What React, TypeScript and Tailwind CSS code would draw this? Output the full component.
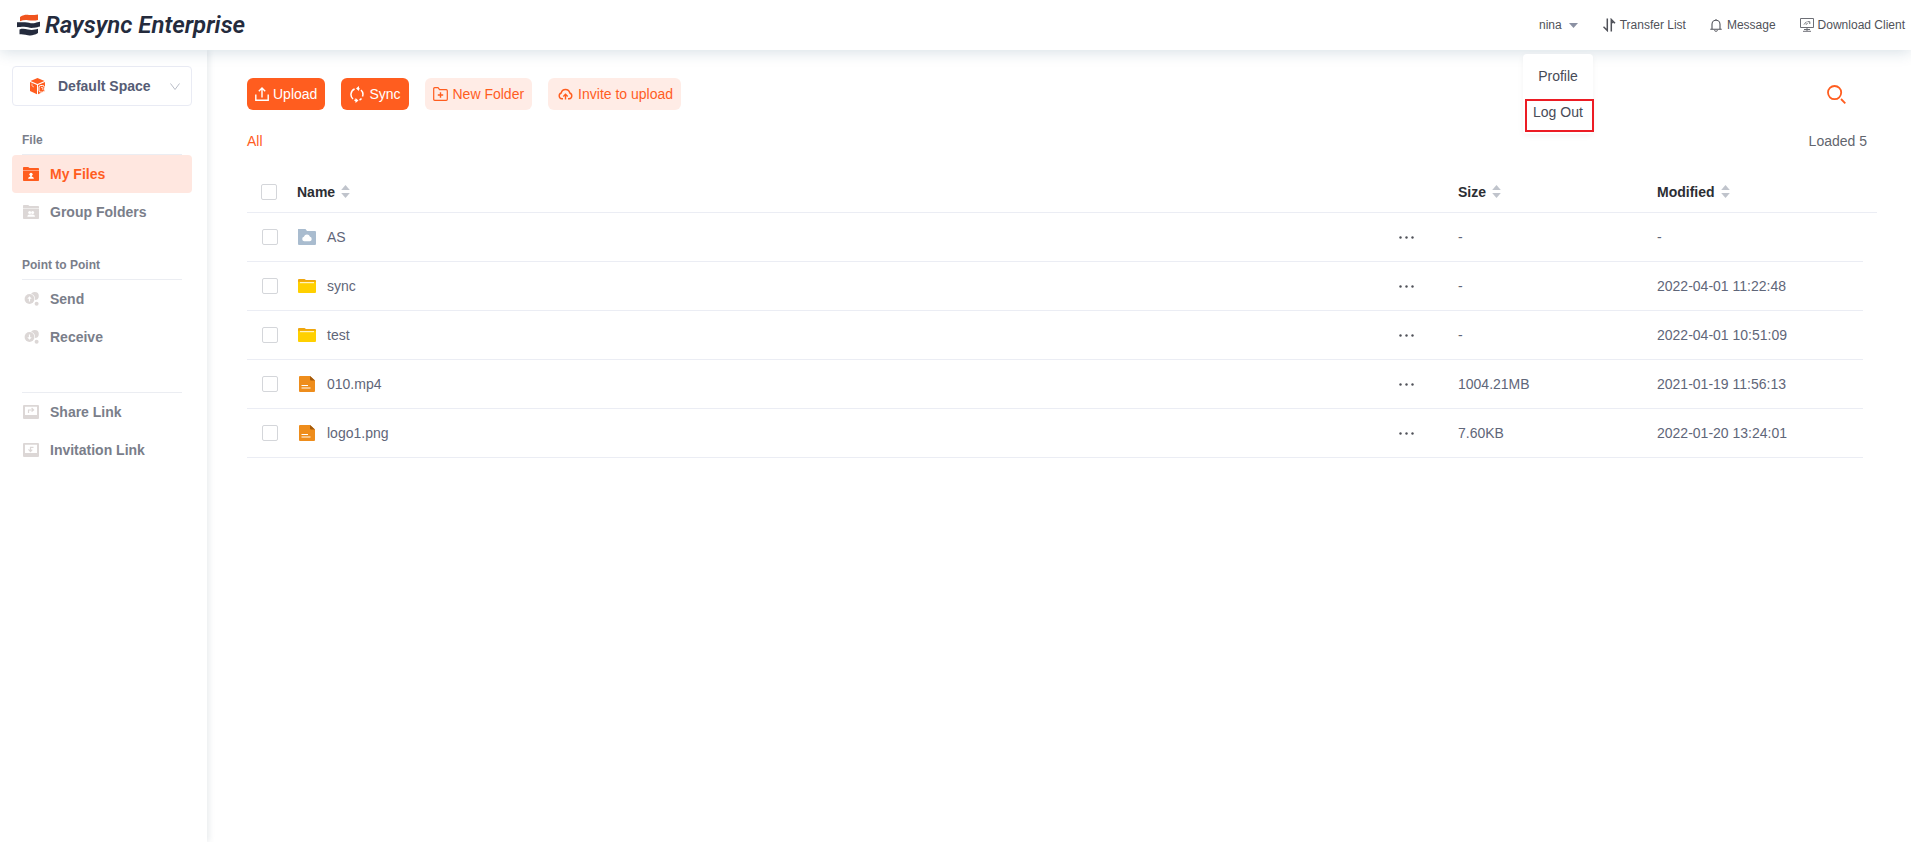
import React, { useState } from 'react';

type FileKind = 'cloud' | 'folder' | 'file';

interface FileRow {
    name: string;
    kind: FileKind;
    size: string;
    modified: string;
}

const files: FileRow[] = [
    { name: 'AS', kind: 'cloud', size: '-', modified: '-' },
    { name: 'sync', kind: 'folder', size: '-', modified: '2022-04-01 11:22:48' },
    { name: 'test', kind: 'folder', size: '-', modified: '2022-04-01 10:51:09' },
    { name: '010.mp4', kind: 'file', size: '1004.21MB', modified: '2021-01-19 11:56:13' },
    { name: 'logo1.png', kind: 'file', size: '7.60KB', modified: '2022-01-20 13:24:01' },
];

// Brand mark
const LogoMark = () => (
    <svg width="23" height="22" viewBox="0 0 23 22" aria-hidden="true">
        <path d="M3 3C7 0.500 9 0.700 12 0.900C15 1.100 18 0.800 21 0.400V6C17 7 14 6.400 11 6.200C8 5.900 5.500 6.200 3 7.200Z" fill="#f0541e" />
        <path d="M0 8.200C4 8.400 5 8.200 8 8.200C12 8.200 14 10 18 9C20 8.400 21 7.900 23 7.800V12.400C21 12.700 20 13.400 17 13.800C12 14.400 11 12.800 7 12.800C4 12.800 2 13.200 0 13.200Z" fill="#242b3d" />
        <path d="M2.500 15.400C6 14.400 8 15 11 15.600C15 16.400 18 15.800 21 14.800V19C17 21.500 14 21.600 11 21.200C7 20.600 5 20.200 2.500 20.200Z" fill="#242b3d" />
    </svg>
);

const CubeIcon = () => (
    <svg width="16" height="17" viewBox="0 0 16 17" aria-hidden="true">
        <path d="M7.500 0L14.500 3L7.500 6L0.500 3Z" fill="#ff5d1f" />
        <path d="M0 4L7 7V16.200L0 13Z" fill="#ff5d1f" />
        <path d="M8 7L15 4V13L8 16.200Z" fill="#ff5d1f" />
        <path d="M2 5.500V8L4 9" stroke="#fff" strokeWidth="0.600" fill="none" />
        <rect x="9" y="7.500" width="5.400" height="6.600" rx="1.800" fill="#ff5d1f" stroke="#fff" strokeWidth="1" />
        <path d="M11 9.500H12.800V12" stroke="#fff" strokeWidth="0.700" fill="none" />
    </svg>
);

const UserFolderIcon = ({ group }: { group?: boolean }) => (
    <svg width="16" height="14" viewBox="0 0 16 14" aria-hidden="true">
        <path d="M0 0.800Q0 0 0.800 0H5.200L6.500 1H15.200Q16 1 16 1.800V3H0Z" fill="currentColor" />
        <path d="M0 3.400H16V13.200Q16 14 15.200 14H0.800Q0 14 0 13.200Z" fill="currentColor" />
        {group ? (
            <g fill="#fff">
                <circle cx="6.700" cy="7.400" r="1.500" />
                <circle cx="9.600" cy="7.400" r="1.500" />
                <path d="M4.300 11.800Q4.300 9.400 6.700 9.400H9.600Q12 9.400 12 11.800Z" />
            </g>
        ) : (
            <g fill="#fff">
                <circle cx="8" cy="7.300" r="1.600" />
                <path d="M7.300 8H8.700V9.400Q10.900 9.700 10.900 11.700H5.100Q5.100 9.700 7.300 9.400Z" />
            </g>
        )}
    </svg>
);

const PointIcon = ({ down }: { down?: boolean }) => (
    <svg width="16" height="14" viewBox="0 0 16 14" aria-hidden="true">
        <circle cx="11.800" cy="4" r="4" fill="currentColor" />
        <circle cx="6.500" cy="7" r="5.600" fill="#fff" />
        <circle cx="6.500" cy="7" r="4.900" fill="currentColor" />
        <circle cx="13.600" cy="11.800" r="2" fill="currentColor" />
        <path d={down ? 'M6.500 9.800L4.300 7.300H5.900V4.600H7.100V7.300H8.700Z' : 'M6.500 4.200L4.300 6.700H5.900V9.400H7.100V6.700H8.700Z'} fill="#fff" />
    </svg>
);

const LinkIcon = ({ incoming }: { incoming?: boolean }) => (
    <svg width="16" height="14" viewBox="0 0 16 14" aria-hidden="true">
        <path d="M1 0H15Q16 0 16 1V13Q16 14 15 14H1Q0 14 0 13V1Q0 0 1 0ZM2 1.800V10H14V1.800Z" fill="currentColor" fillRule="evenodd" />
        {incoming ? (
            <path d="M10.500 4.300H7.500V8M5.500 6.400L7.500 8.600L9.200 6.600" stroke="currentColor" strokeWidth="1.200" fill="none" />
        ) : (
            <path d="M5.500 8V5H10M8.600 3L10.600 5L8.600 6.600" stroke="currentColor" strokeWidth="1.200" fill="none" />
        )}
    </svg>
);

const SortArrows = () => (
    <svg width="9" height="13" viewBox="0 0 9 13" fill="#c0c4cc" aria-hidden="true">
        <path d="M4.500 0L8.800 5H0.200Z" />
        <path d="M4.500 13L8.800 8H0.200Z" />
    </svg>
);

const FileIcon = ({ kind }: { kind: FileKind }) => {
    if (kind === 'cloud') {
        return (
            <svg width="18" height="16" viewBox="0 0 18 16" aria-hidden="true">
                <path d="M0 0H7.500L9 2H17Q18 2 18 3V15Q18 16 17 16H1Q0 16 0 15Z" fill="#a9bccf" />
                <path d="M6.300 12.300A2.300 2.300 0 0 1 5.900 7.800A3.200 3.200 0 0 1 12 7.800A2.300 2.300 0 0 1 11.700 12.300Z" fill="#fff" />
            </svg>
        );
    }
    if (kind === 'folder') {
        return (
            <svg width="18" height="14" viewBox="0 0 18 14" aria-hidden="true">
                <path d="M0 1Q0 0 1 0H6.500L8 1H17Q18 1 18 2V7H0Z" fill="#efa60e" />
                <path d="M0 2.800H18V13Q18 14 17 14H1Q0 14 0 13Z" fill="#ffd000" />
                <rect x="2" y="3" width="14" height="1.200" fill="#fff3c4" />
            </svg>
        );
    }
    return (
        <svg width="18" height="16" viewBox="0 0 18 16" aria-hidden="true">
            <path d="M2 0H12L17 4.500V15Q17 16 16 16H2Q1 16 1 15V1Q1 0 2 0Z" fill="#ee8d1c" />
            <path d="M12 0L17 4.500H13Q12 4.500 12 3.500Z" fill="#a35a0c" />
            <path d="M3.500 9.500H10" stroke="#fff" strokeWidth="1" />
            <path d="M3.500 12H12.500" stroke="#f9d3a4" strokeWidth="1.600" />
        </svg>
    );
};

const Checkbox = ({ label }: { label: string }) => (
    <input
        type="checkbox"
        aria-label={label}
        className="block size-4 appearance-none rounded-xs border border-[#d4d6da] bg-white checked:border-[#ff5d1f] checked:bg-[#ff5d1f]"
    />
);

interface NavItemProps {
    label: string;
    icon: React.ReactNode;
    active?: boolean;
}

const NavItem: React.FC<NavItemProps> = ({ label, icon, active }) => (
    <li>
        <a
            href="#"
            className={`flex h-[38px] items-center gap-[11px] rounded pl-[11px] text-sm font-bold ${
                active ? 'bg-[#ffe7e0] text-[#ff5d1f]' : 'text-[#7a7e8a]'
            }`}
        >
            <span className={active ? 'text-[#ff5d1f]' : 'text-[#dcd7d6]'}>{icon}</span>
            {label}
        </a>
    </li>
);

const Sidebar = () => (
    <aside className="w-[207px] shrink-0 bg-white px-3 pt-4 shadow-[2px_0_6px_rgba(30,60,80,0.1)]">
        <div className="relative w-[180px]">
            <span className="pointer-events-none absolute top-3 left-[18px]"><CubeIcon /></span>
            <select
                aria-label="Space"
                className="h-10 w-full appearance-none rounded border border-[#e9ebf4] bg-white pl-[45px] text-sm font-bold text-[#565c75]"
            >
                <option>Default Space</option>
            </select>
            <svg className="pointer-events-none absolute top-[17px] right-3" width="10" height="8" viewBox="0 0 10 8" fill="none" stroke="#b9bdc7" aria-hidden="true">
                <path d="M0.500 0.500L5 6.500L9.500 0.500" />
            </svg>
        </div>
        <nav className="w-[180px]">
            <h2 className="mx-[10px] border-b border-[#ebedf2] pt-6 pb-1 text-xs/5 font-bold text-[#7a7e8a]">File</h2>
            <ul>
                <NavItem label="My Files" icon={<UserFolderIcon />} active />
                <NavItem label="Group Folders" icon={<UserFolderIcon group />} />
            </ul>
            <h2 className="mx-[10px] border-b border-[#ebedf2] pt-6 pb-1 text-xs/5 font-bold text-[#7a7e8a]">Point to Point</h2>
            <ul>
                <NavItem label="Send" icon={<PointIcon />} />
                <NavItem label="Receive" icon={<PointIcon down />} />
            </ul>
            <hr className="mx-[10px] mt-9 border-[#ebedf2]" />
            <ul>
                <NavItem label="Share Link" icon={<LinkIcon />} />
                <NavItem label="Invitation Link" icon={<LinkIcon incoming />} />
            </ul>
        </nav>
    </aside>
);

const Header = () => {
    const [menuOpen, setMenuOpen] = useState(true);

    return (
        <header className="relative z-10 flex h-[50px] items-center justify-between bg-white pr-[6px] pl-[17px] shadow-[0_2px_14px_rgba(30,80,110,0.18)]">
            <a href="#" className="flex items-center gap-[5px] text-[#242b3d]">
                <LogoMark />
                <span className="font-[Roboto,sans-serif] text-2xl/6 font-semibold italic">Raysync Enterprise</span>
            </a>
            <nav className="flex items-center text-xs text-[#505259]">
                <div className="relative mr-[25px]">
                    <button type="button" className="flex items-center gap-[7px]" aria-expanded={menuOpen} onClick={() => setMenuOpen(!menuOpen)}>
                        nina
                        <svg width="9" height="5" viewBox="0 0 9 5" fill="#8b91a3" aria-hidden="true"><path d="M0 0H9L4.500 5Z" /></svg>
                    </button>
                    {menuOpen && (
                        <div className="absolute top-[37px] -left-4 flex h-20 w-[70px] flex-col rounded bg-white text-sm text-[#474b57] shadow-[0_2px_6px_rgba(0,0,0,0.05)]">
                            <button type="button" className="h-[45px] pb-[2px] text-center">Profile</button>
                            <button type="button" className="ml-[2px] h-[33px] w-[69px] border-2 border-[#ec1c24] pr-[3px] pb-2 text-center">Log Out</button>
                        </div>
                    )}
                </div>
                <a href="#" className="mr-6 flex items-center gap-1">
                    <svg width="13" height="14" viewBox="0 0 13 14" fill="none" stroke="#505259" strokeWidth="1.500" aria-hidden="true">
                        <path d="M4.300 0.500V12.500L0.500 8.700M8.300 13.500V1.500L12 5.200" />
                        <path d="M8 5.500V1.500L11 5Z" fill="#505259" stroke="none" />
                    </svg>
                    Transfer List
                </a>
                <a href="#" className="mr-6 flex items-center gap-[5px]">
                    <svg width="12" height="13" viewBox="0 0 12 13" fill="none" stroke="#505259" aria-hidden="true">
                        <path d="M2 10V5.300A4 4 0 0 1 10 5.300V10M0.300 10.200H11.700M6 0V1.300" strokeWidth="1.100" />
                        <path d="M4.300 11.500Q6 13.300 7.700 11.500" />
                    </svg>
                    Message
                </a>
                <a href="#" className="flex items-center gap-1">
                    <svg width="14" height="14" viewBox="0 0 14 14" fill="none" stroke="#6d6f76" aria-hidden="true">
                        <path d="M0.500 0.500H13.500V9.500H0.500ZM7 9.500V13M3 13.300H11M4 11.500H10" />
                        <path d="M4 6.500L6.500 3.700M6 6.800L7.500 5M7.500 3.700H9.800V6" />
                    </svg>
                    Download Client
                </a>
            </nav>
        </header>
    );
};

const Toolbar = () => (
    <div className="flex items-center justify-between">
        <div className="flex gap-4 text-sm">
            <button type="button" className="flex h-8 items-center gap-1 rounded-md bg-[#ff5d1f] px-2 text-white">
                <svg width="14" height="14" viewBox="0 0 14 14" fill="none" stroke="currentColor" strokeWidth="1.400" aria-hidden="true">
                    <path d="M0.800 7.500V13.200H13.200V7.500M7 10.500V1.200M3.800 4.200L7 1L10.200 4.200" />
                </svg>
                Upload
            </button>
            <button type="button" className="flex h-8 items-center gap-[5px] rounded-md bg-[#ff5d1f] pr-2 pl-[9px] text-white">
                <svg width="14" height="17" viewBox="0 0 14 17" fill="none" stroke="currentColor" strokeWidth="1.500" aria-hidden="true">
                    <path d="M4.600 3A6 6 0 0 0 3 13M7.500 2.500A6 6 0 0 1 9.500 3M11 4A6 6 0 0 1 12.500 10.500M11.500 12.500A6 6 0 0 1 9.500 14M6.500 14.500A6 6 0 0 1 4.500 14" />
                    <path d="M9 0V5L6 2.600ZM5.500 12V17L8.500 14.500Z" fill="currentColor" stroke="none" />
                </svg>
                Sync
            </button>
            <button type="button" className="flex h-8 items-center gap-[5px] rounded-md bg-[#ffece6] px-2 text-[#ff5d1f]">
                <svg width="15" height="14" viewBox="0 0 15 14" fill="none" stroke="currentColor" strokeWidth="1.200" aria-hidden="true">
                    <path d="M0.700 12.300V1.700Q0.700 0.700 1.700 0.700H5L6.600 2.700H13.300Q14.300 2.700 14.300 3.700V12.300Q14.300 13.300 13.300 13.300H1.700Q0.700 13.300 0.700 12.300Z" />
                    <path d="M7.500 5.300V10.700M4.800 8H10.200" strokeWidth="1.400" />
                </svg>
                New Folder
            </button>
            <button type="button" className="flex h-8 items-center gap-[5px] rounded-md bg-[#ffece6] pr-2 pl-[10px] text-[#ff5d1f]">
                <svg width="15" height="12" viewBox="0 0 15 12" fill="none" stroke="currentColor" strokeWidth="1.400" aria-hidden="true">
                    <path d="M5 10.800H3.800A3 3 0 0 1 3.200 5A4.400 4.400 0 0 1 11.800 5A3 3 0 0 1 11.200 10.800H10" />
                    <path d="M7.500 11.500V6.500M5.300 8.500L7.500 6.200L9.700 8.500" />
                </svg>
                Invite to upload
            </button>
        </div>
        <button type="button" aria-label="Search" className="mr-[31px]">
            <svg width="19" height="19" viewBox="0 0 19 19" fill="none" stroke="#ff5d1f" strokeWidth="1.800" aria-hidden="true">
                <circle cx="7.600" cy="7.600" r="6.600" />
                <path d="M14 14L18.300 18.300" />
            </svg>
        </button>
    </div>
);

const FileTable = () => (
    <table className="mt-4 w-full table-fixed border-separate border-spacing-0 text-left text-sm">
        <colgroup>
            <col className="w-[50px]" />
            <col />
            <col className="w-[59px]" />
            <col className="w-[199px]" />
            <col className="w-[206px]" />
            <col className="w-[14px]" />
        </colgroup>
        <thead className="text-[#2c2e33]">
            <tr className="h-[45px] *:border-b *:border-[#ebedf4] *:p-0 *:pt-[3px]">
                <th><div className="pl-[14px]"><Checkbox label="Select all" /></div></th>
                <th>
                    <button type="button" className="flex items-center gap-[6px] font-bold">Name <SortArrows /></button>
                </th>
                <th aria-label="Actions" />
                <th>
                    <button type="button" className="flex items-center gap-[6px] font-bold">Size <SortArrows /></button>
                </th>
                <th>
                    <button type="button" className="flex items-center gap-[6px] font-bold">Modified <SortArrows /></button>
                </th>
                <th aria-hidden="true" />
            </tr>
        </thead>
        <tbody className="text-[#5f6679]">
            {files.map(file => (
                <tr key={file.name} className="h-[49px] *:border-b *:border-[#ebedf4] *:p-0">
                    <td><div className="pl-[15px]"><Checkbox label={`Select ${file.name}`} /></div></td>
                    <td>
                        <a href="#" className="flex items-center gap-[11px] pl-px"><FileIcon kind={file.kind} />{file.name}</a>
                    </td>
                    <td>
                        <button type="button" aria-label={`More actions for ${file.name}`} className="flex h-5 items-center">
                            <svg width="15" height="3" viewBox="0 0 15 3" fill="#505259" aria-hidden="true">
                                <circle cx="1.500" cy="1.500" r="1.200" />
                                <circle cx="7.500" cy="1.500" r="1.200" />
                                <circle cx="13.500" cy="1.500" r="1.200" />
                            </svg>
                        </button>
                    </td>
                    <td>{file.size}</td>
                    <td>{file.modified}</td>
                </tr>
            ))}
        </tbody>
    </table>
);

const App: React.FC = () => {
    return (
        <div className="flex min-h-screen flex-col bg-white font-['Liberation_Sans',Arial,sans-serif]">
            <Header />
            <div className="flex flex-1">
                <Sidebar />
                <main className="min-w-0 flex-1 pt-7 pr-[34px] pl-10">
                    <Toolbar />
                    <div className="mt-5 flex h-[22px] items-center justify-between pr-[10px] text-sm">
                        <a href="#" className="text-[#ff5d1f]">All</a>
                        <span className="text-[#62656e]">Loaded 5</span>
                    </div>
                    <FileTable />
                </main>
            </div>
        </div>
    );
};

export default App;
